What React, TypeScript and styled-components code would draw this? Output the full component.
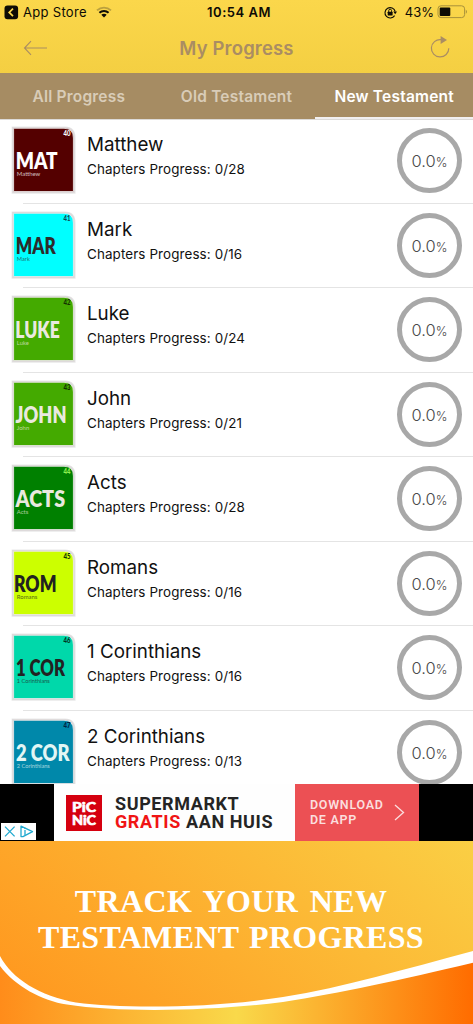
import React from 'react';
import styled, { createGlobalStyle } from 'styled-components';

const GlobalStyle = createGlobalStyle`
  * { box-sizing: border-box; }
  html, body { margin: 0; padding: 0; background: #fff; }
  body { font-family: Inter, "Liberation Sans", sans-serif; color: #111; overflow: hidden; }
  svg { display: block; flex: none; overflow: visible; }
`;

const Screen = styled.div`
  width: 473px;
  height: 1024px;
  display: flex;
  flex-direction: column;
  overflow: hidden;
  background: #fff;
`;

const Header = styled.header`
  height: 73px;
  flex: none;
  background: linear-gradient(#fbd74b, #f4cf42);
`;

const StatusBar = styled.div`
  height: 24px;
  display: grid;
  grid-template-columns: 1fr auto 1fr;
  align-items: center;
  color: #0d0b05;
  font-size: 13px;
  padding: 0 5px 0 4px;
`;

const StatusGroup = styled.div<{ $end?: boolean }>`
  display: flex;
  align-items: center;
  justify-content: ${(p) => (p.$end ? 'flex-end' : 'flex-start')};
`;

const StoreLabel = styled.span`
  margin: 0 9px 0 4px;
  letter-spacing: 0.3px;
`;

const Clock = styled.span`
  font-weight: 600;
  letter-spacing: 0.5px;
  padding-left: 6px;
`;

const BatteryLabel = styled.span`
  margin: 0 4px 0 8px;
  letter-spacing: 0;
`;

const NavBar = styled.div`
  height: 48px;
  display: grid;
  grid-template-columns: 1fr auto 1fr;
  align-items: center;
  padding: 0 23px;
  color: #aa8d63;
`;

const NavTitle = styled.h1`
  margin: 0;
  font-size: 18.5px;
  font-weight: 600;
  line-height: 46px;
  letter-spacing: 0.15px;
`;

const NavEnd = styled.div`
  display: flex;
  justify-content: flex-end;
  padding-bottom: 2px;
`;

const Tabs = styled.nav`
  height: 46px;
  flex: none;
  display: grid;
  grid-template-columns: repeat(3, 1fr);
  background: #a68c63;
`;

const Tab = styled.div<{ $active?: boolean }>`
  display: flex;
  align-items: center;
  justify-content: center;
  font-size: 15.5px;
  font-weight: 600;
  letter-spacing: 0.2px;
  white-space: nowrap;
  padding-top: 2px;
  color: ${(p) => (p.$active ? '#fff' : '#d9ccb8')};
  border-bottom: 2px solid ${(p) => (p.$active ? '#f1eff0' : 'transparent')};
`;

const List = styled.main`
  height: 665px;
  flex: none;
  overflow: hidden;
  box-shadow: inset 0 1px #dcdad8;
`;

const Row = styled.section`
  height: 84.55px;
  display: flex;
  padding: 7px 11px 0 11px;
  background: linear-gradient(#e4e4e4, #e4e4e4) no-repeat 23px 100% / 100% 1px;
`;

const Info = styled.div`
  flex: 1;
  padding: 7px 0 0 11px;
`;

const BookName = styled.h2`
  margin: 0;
  font-size: 18.8px;
  font-weight: 400;
  line-height: 24px;
  white-space: nowrap;
`;

const Chapters = styled.p`
  margin: 2px 0 0;
  font-size: 13.4px;
  line-height: 20px;
  letter-spacing: 0.12px;
  white-space: nowrap;
`;

const Ring = styled.div`
  width: 65px;
  height: 65px;
  margin-top: 2px;
  border: 5.6px solid #a8a8a8;
  border-radius: 50%;
  display: flex;
  align-items: baseline;
  justify-content: center;
  font-size: 16.5px;
  font-weight: 300;
  line-height: 56px;
  color: #4a4a4a;
`;

const Percent = styled.span`
  font-size: 12.5px;
`;

const AdBar = styled.aside`
  height: 57px;
  flex: none;
  display: flex;
  background: #000;
  font-family: Roboto, sans-serif;
`;

const AdChoices = styled.div`
  width: 54px;
  display: flex;
  align-items: flex-end;
  padding: 0 0 1px 1px;
`;

const AdBody = styled.div`
  width: 241px;
  background: #fefefe;
  display: flex;
  align-items: center;
  padding-left: 12px;
  gap: 13px;
`;

const AdCopy = styled.div`
  padding-top: 1px;
  font-size: 18px;
  font-weight: 700;
  line-height: 18px;
  color: #252525;
  white-space: nowrap;
`;

const AdLine = styled.div<{ $spacing: number }>`
  letter-spacing: ${(p) => p.$spacing}px;
`;

const Free = styled.span`
  color: #f01414;
`;

const AdButton = styled.div`
  width: 124px;
  background: #ec5054;
  display: flex;
  align-items: center;
  justify-content: space-between;
  padding: 0 14px 0 15px;
  font-size: 12.5px;
  font-weight: 600;
  line-height: 15px;
  color: #fbdede;
  letter-spacing: 0.7px;
  white-space: nowrap;
`;

const AdButtonLabel = styled.div`
  padding-bottom: 2px;
`;

const Promo = styled.footer`
  height: 183px;
  flex: none;
  display: grid;
`;

const PromoArt = styled.svg`
  grid-area: 1 / 1;
`;

const PromoText = styled.div`
  grid-area: 1 / 1;
  z-index: 1;
  padding: 42px 0 0;
  width: 462px;
  text-align: center;
  font-family: "Liberation Serif", serif;
  font-size: 32px;
  font-weight: 700;
  line-height: 36px;
  color: #fff;
  white-space: nowrap;
`;

const PromoLine = styled.div<{ $spacing: number; $word: number }>`
  letter-spacing: ${(p) => p.$spacing}px;
  word-spacing: ${(p) => p.$word}px;
`;

type Book = {
  num: number;
  name: string;
  code: string;
  chapters: number;
  bg: string;
  ink: string;
  numInk: string;
  x: number;
  width: number;
  nameWidth: number;
};

const books: Book[] = [
  { num: 40, name: 'Matthew', code: 'MAT', chapters: 28, bg: '#540000', ink: '#fff', numInk: '#fff', x: 4.7, width: 42, nameWidth: 23.5 },
  { num: 41, name: 'Mark', code: 'MAR', chapters: 16, bg: '#00ffff', ink: '#2c2c2c', numInk: '#145', x: 4.7, width: 40, nameWidth: 13 },
  { num: 42, name: 'Luke', code: 'LUKE', chapters: 24, bg: '#44aa00', ink: '#e9e9df', numInk: '#143300', x: 4.2, width: 44.5, nameWidth: 12 },
  { num: 43, name: 'John', code: 'JOHN', chapters: 21, bg: '#44aa00', ink: '#e9e9df', numInk: '#143300', x: 4.6, width: 51, nameWidth: 12.5 },
  { num: 44, name: 'Acts', code: 'ACTS', chapters: 28, bg: '#008000', ink: '#e9e9df', numInk: '#8df050', x: 4.6, width: 49.5, nameWidth: 11.5 },
  { num: 45, name: 'Romans', code: 'ROM', chapters: 16, bg: '#ccff00', ink: '#222', numInk: '#143300', x: 3, width: 42.5, nameWidth: 20.5 },
  { num: 46, name: '1 Corinthians', code: '1 COR', chapters: 16, bg: '#00d8aa', ink: '#222', numInk: '#032', x: 5, width: 49, nameWidth: 33 },
  { num: 47, name: '2 Corinthians', code: '2 COR', chapters: 13, bg: '#0088aa', ink: '#e2f6f4', numInk: '#024', x: 5, width: 53.5, nameWidth: 33 },
];

const Cover = ({ book }: { book: Book }) => (
  <svg width="65" height="69" viewBox="0 0 65 69" fontFamily="Lato, sans-serif">
    <path d="M.6 .5H54Q64.6 .5 64.6 12V67.7H.6Z" fill="#000" opacity=".09" />
    <path d="M1.2 .9H54Q63.8 .9 63.8 12V66.9H1.2Z" fill="#dedadb" />
    <path d="M2.6 2.3H53Q62.4 2.3 62.4 12V65.5H2.6Z" fill={book.bg} stroke="#eeeaea" strokeWidth=".8" />
    <text x="52.6" y="9.9" fontSize="6.6" fontWeight="900" fill={book.numInk} textLength="7" lengthAdjust="spacingAndGlyphs">{book.num}</text>
    <text x={book.x} y="43" fontSize="23.4" fontWeight="800" fill={book.ink} textLength={book.width} lengthAdjust="spacingAndGlyphs">{book.code}</text>
    <text x="5.8" y="49.8" fontSize="6.2" fill={book.ink} opacity=".7" textLength={book.nameWidth} lengthAdjust="spacingAndGlyphs">{book.name}</text>
  </svg>
);

const BackBadge = () => (
  <svg width="15" height="15" viewBox="0 0 15 15">
    <rect x=".5" y=".5" width="13.6" height="13.8" rx="3" fill="#0d0b05" />
    <path d="M9 3.6 5.2 7.4 9 11.2" fill="none" stroke="#fbd74b" strokeWidth="1.7" />
  </svg>
);

const Wifi = () => (
  <svg width="16" height="12" viewBox="0 0 16 12">
    <path d="M1 4.4C5 .7 11 .7 15 4.4" fill="none" stroke="#bba13e" strokeWidth="1.9" />
    <path d="M3.4 6.7C6 4.3 10 4.3 12.6 6.7" fill="none" stroke="#0d0b05" strokeWidth="2" />
    <path d="M8 11.4 5.3 8.7C6.8 7.4 9.2 7.4 10.7 8.7Z" fill="#0d0b05" />
  </svg>
);

const RotationLock = () => (
  <svg width="13" height="13" viewBox="0 0 13 13" fill="none" stroke="#0d0b05">
    <path d="M10.6 9.6A5.2 5.2 0 1 1 11.2 5.5" strokeWidth="1.1" />
    <path d="M9.3 5.4H13L11.2 8.2Z" fill="#0d0b05" stroke="none" />
    <rect x="3.7" y="5.8" width="4.9" height="3.7" rx=".4" fill="#0d0b05" stroke="none" />
    <path d="M4.7 6V4.7a1.45 1.45 0 0 1 2.9 0V6" strokeWidth=".9" />
  </svg>
);

const Battery = () => (
  <svg width="30" height="14" viewBox="0 0 30 14">
    <rect x="0" y=".8" width="26.6" height="11.8" rx="3" fill="none" stroke="#a8913a" strokeWidth="1" />
    <path d="M27.8 4.7v4c1.5-.5 1.5-3.5 0-4Z" fill="#a8913a" />
    <rect x="1.7" y="2.5" width="10.6" height="8.4" rx="1" fill="#0d0b05" />
  </svg>
);

const BackArrow = () => (
  <svg width="25" height="16" viewBox="0 0 25 16" fill="none" stroke="currentColor" strokeWidth="1.1">
    <path d="M24 8H1.5M8 1.2 1.5 8 8 14.8" />
  </svg>
);

const Refresh = () => (
  <svg width="20" height="22" viewBox="0 0 20 22" fill="none" stroke="currentColor" strokeWidth="1.2">
    <path d="M11 3.6A8.7 8.7 0 1 0 18.8 12.2" />
    <path d="M10.6 0V8L17 4Z" fill="currentColor" stroke="none" />
  </svg>
);

const AdChoicesIcon = () => (
  <svg width="35" height="17" viewBox="0 0 35 17" fill="none" stroke="#20a9cf" strokeWidth="1.3">
    <rect width="35" height="17" fill="#fff" stroke="none" />
    <path d="M4 3.6 13.6 13.4M13.6 3.6 4 13.4" />
    <path d="M20 13.6V3.2L31.5 8.6 22 13.6Z" strokeLinejoin="round" />
    <path d="M24 7v5M24 4.7v1.3" />
  </svg>
);

const PicnicLogo = () => (
  <svg width="36" height="36" viewBox="0 0 36 36" fontFamily="Lato, sans-serif" fontWeight="900" fill="#fff" stroke="#fff" strokeWidth=".6">
    <rect width="36" height="36" fill="#d5000f" stroke="none" />
    <text x="6" y="17.2" fontSize="13.5" textLength="24" lengthAdjust="spacingAndGlyphs">PiC</text>
    <text x="6" y="29.6" fontSize="13.5" textLength="24" lengthAdjust="spacingAndGlyphs">NiC</text>
  </svg>
);

const Chevron = () => (
  <svg width="11" height="17" viewBox="0 0 11 17" fill="none" stroke="#fbdede" strokeWidth="1.3">
    <path d="M1 1 9.5 8.5 1 16" />
  </svg>
);

export default function App() {
  return (
    <Screen>
      <GlobalStyle />
      <Header>
        <StatusBar>
          <StatusGroup>
            <BackBadge />
            <StoreLabel>App Store</StoreLabel>
            <Wifi />
          </StatusGroup>
          <Clock>10:54 AM</Clock>
          <StatusGroup $end>
            <RotationLock />
            <BatteryLabel>43%</BatteryLabel>
            <Battery />
          </StatusGroup>
        </StatusBar>
        <NavBar>
          <BackArrow />
          <NavTitle>My Progress</NavTitle>
          <NavEnd>
            <Refresh />
          </NavEnd>
        </NavBar>
      </Header>
      <Tabs>
        <Tab>All Progress</Tab>
        <Tab>Old Testament</Tab>
        <Tab $active>New Testament</Tab>
      </Tabs>
      <List>
        {books.map((book) => (
          <Row key={book.num}>
            <Cover book={book} />
            <Info>
              <BookName>{book.name}</BookName>
              <Chapters>Chapters Progress: 0/{book.chapters}</Chapters>
            </Info>
            <Ring>
              0.0<Percent>%</Percent>
            </Ring>
          </Row>
        ))}
      </List>
      <AdBar>
        <AdChoices>
          <AdChoicesIcon />
        </AdChoices>
        <AdBody>
          <PicnicLogo />
          <AdCopy>
            <AdLine $spacing={0.6}>SUPERMARKT</AdLine>
            <AdLine $spacing={0.6}>
              <Free>GRATIS</Free> AAN HUIS
            </AdLine>
          </AdCopy>
        </AdBody>
        <AdButton>
          <AdButtonLabel>
            DOWNLOAD
            <br />
            DE APP
          </AdButtonLabel>
          <Chevron />
        </AdButton>
      </AdBar>
      <Promo>
        <PromoArt width="473" height="183" viewBox="0 0 473 183">
          <defs>
            <linearGradient id="sky" gradientUnits="userSpaceOnUse" x1="80" y1="210" x2="360" y2="-110">
              <stop offset="0" stopColor="#ff981f" />
              <stop offset="1" stopColor="#fad045" />
            </linearGradient>
            <linearGradient id="base">
              <stop offset="0" stopColor="#ff8c1a" />
              <stop offset=".5" stopColor="#f9d94a" />
              <stop offset="1" stopColor="#ff6c00" />
            </linearGradient>
          </defs>
          <rect width="473" height="183" fill="url(#base)" />
          <path d="M0 0H473V121.7C400 139 340 152 283 161C215 170 120 172 67 163.500C42 160 15 145 0 125Z" fill="#fff" />
          <path d="M0 0H473V110C405 128 345 146 283 156C215 167 125 168 76 161.500C40 155 12 138 0 115Z" fill="url(#sky)" />
        </PromoArt>
        <PromoText>
          <PromoLine $spacing={0.4} $word={3}>TRACK YOUR NEW</PromoLine>
          <PromoLine $spacing={0.3} $word={2}>TESTAMENT PROGRESS</PromoLine>
        </PromoText>
      </Promo>
    </Screen>
  );
}
